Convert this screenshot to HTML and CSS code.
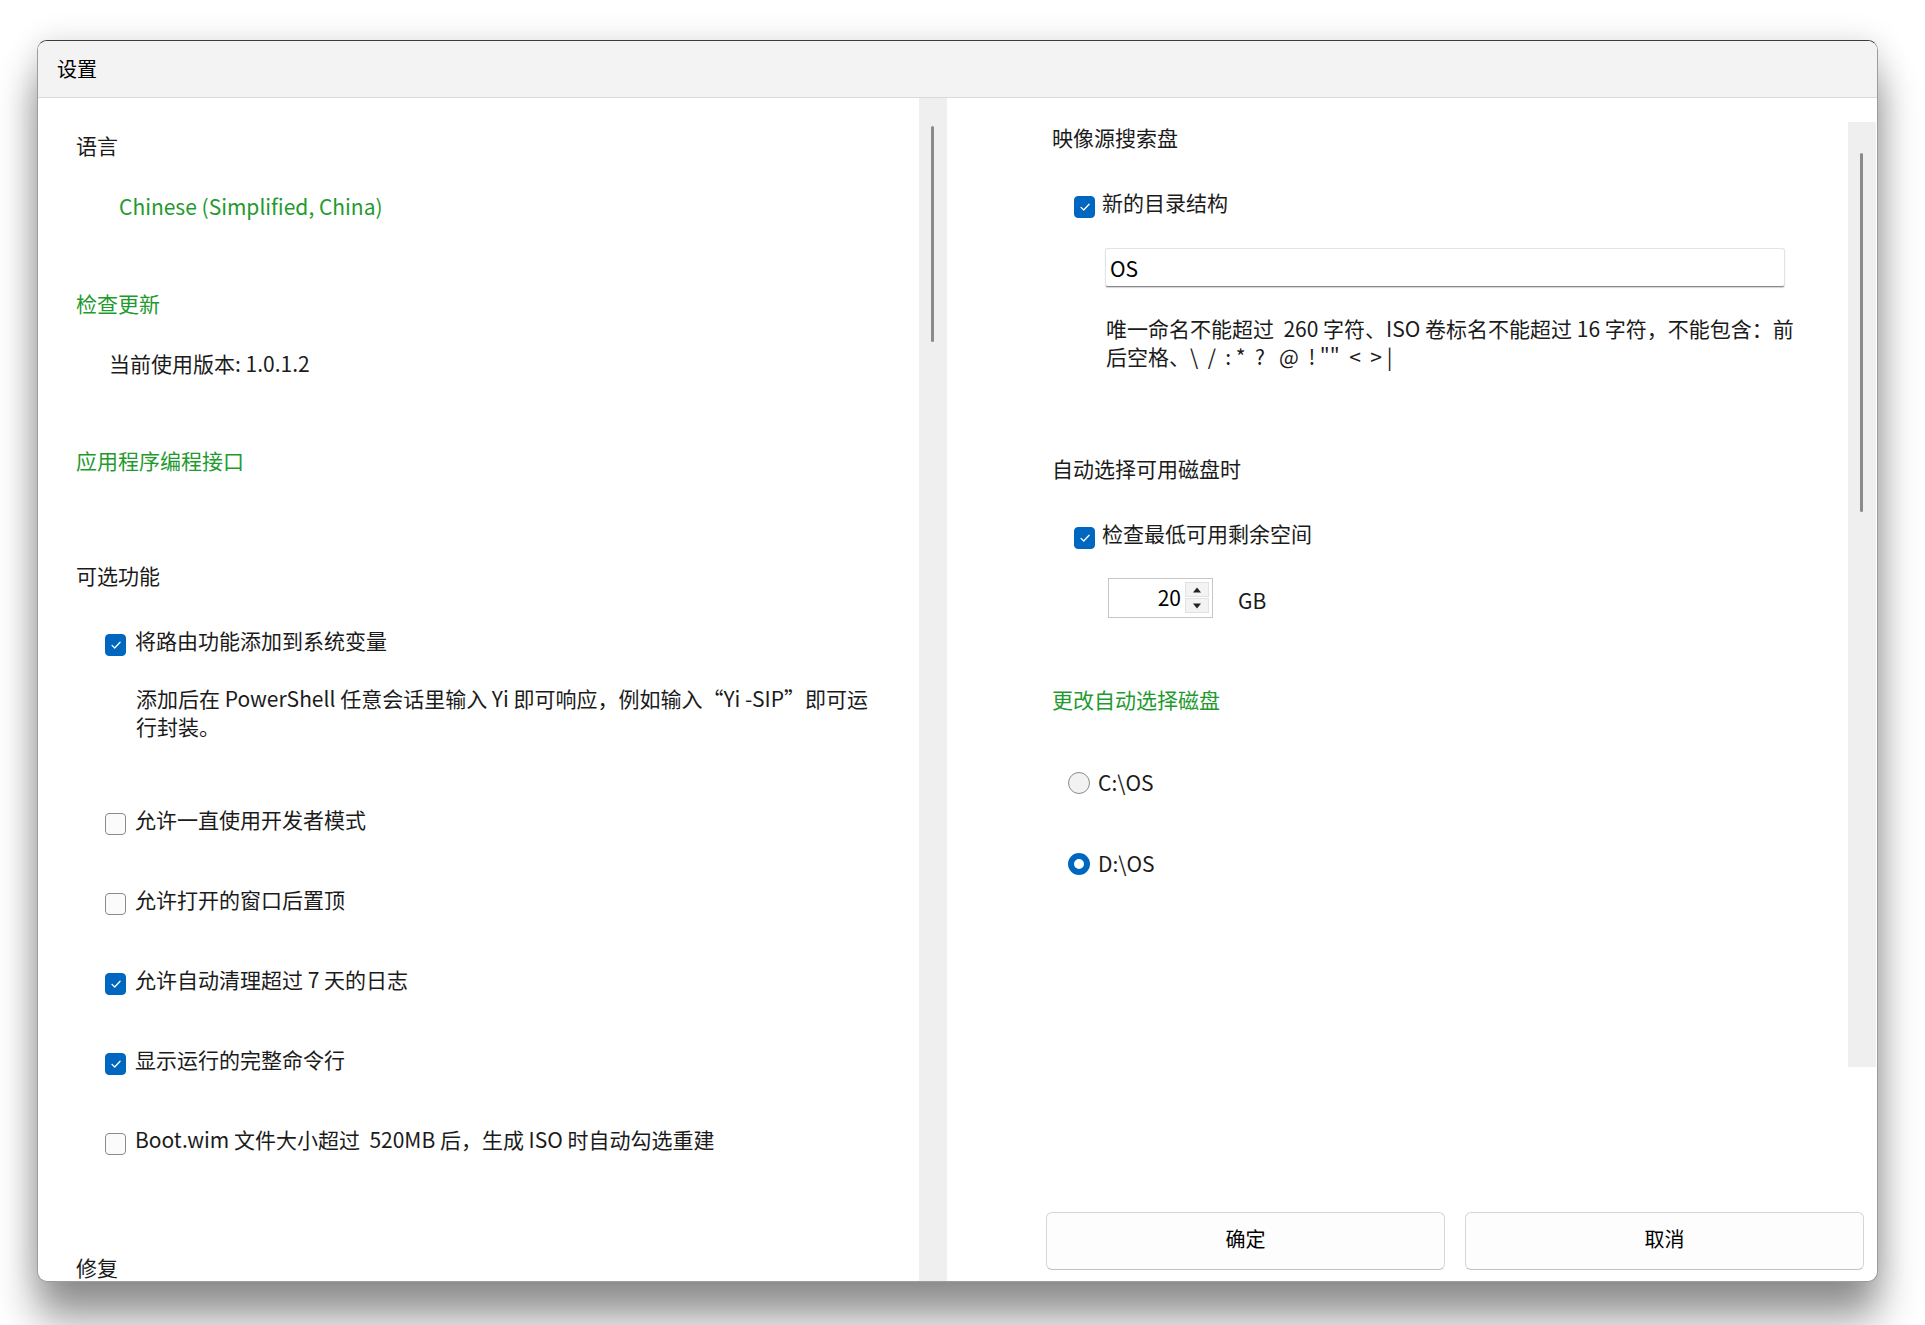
FILE: index.html
```html
<!DOCTYPE html>
<html lang="zh-CN">
<head>
<meta charset="utf-8">
<title>设置</title>
<link rel="stylesheet" href="styles.css">
</head>
<body>
<div class="window">
  <div class="titlebar">设置</div>
  <div class="main">
    <div class="left">
      <div class="left-content">
        <div class="heading">语言</div>
        <div class="lang">Chinese (Simplified, China)</div>
        <div class="link link-update">检查更新</div>
        <div class="version">当前使用版本: 1.0.1.2</div>
        <div class="link link-api">应用程序编程接口</div>
        <div class="heading heading-opt">可选功能</div>
        <div class="options">
          <div class="opt-group">
            <label class="check"><span class="box checked"><svg viewBox="0 0 12 12"><path d="M2.6 6.3l2.3 2.3 4.6-5"/></svg></span>将路由功能添加到系统变量</label>
            <p class="desc">添加后在 PowerShell 任意会话里输入 Yi 即可响应，例如输入“Yi -SIP”即可运行封装。</p>
          </div>
          <label class="check"><span class="box"></span>允许一直使用开发者模式</label>
          <label class="check"><span class="box"></span>允许打开的窗口后置顶</label>
          <label class="check"><span class="box checked"><svg viewBox="0 0 12 12"><path d="M2.6 6.3l2.3 2.3 4.6-5"/></svg></span>允许自动清理超过 7 天的日志</label>
          <label class="check"><span class="box checked"><svg viewBox="0 0 12 12"><path d="M2.6 6.3l2.3 2.3 4.6-5"/></svg></span>显示运行的完整命令行</label>
          <label class="check"><span class="box"></span>Boot.wim 文件大小超过&nbsp; 520MB 后，生成 ISO 时自动勾选重建</label>
        </div>
        <div class="heading heading-repair">修复</div>
      </div>
      <div class="vscroll left-scroll"><div class="thumb"></div></div>
    </div>
    <div class="right">
      <div class="right-top">
        <div class="right-content">
          <div class="heading">映像源搜索盘</div>
          <label class="check check-r1"><span class="box checked"><svg viewBox="0 0 12 12"><path d="M2.6 6.3l2.3 2.3 4.6-5"/></svg></span>新的目录结构</label>
          <div class="textbox">OS</div>
          <p class="help">唯一命名不能超过&nbsp; 260 字符、ISO 卷标名不能超过 16 字符，不能包含：前后空格、\&nbsp; / &nbsp;: * &nbsp;? &nbsp;&nbsp;@ &nbsp;! "" &nbsp;&lt; &nbsp;&gt; |</p>
          <div class="heading heading-auto">自动选择可用磁盘时</div>
          <label class="check check-r2"><span class="box checked"><svg viewBox="0 0 12 12"><path d="M2.6 6.3l2.3 2.3 4.6-5"/></svg></span>检查最低可用剩余空间</label>
          <div class="spin-row">
            <div class="spin">
              <span class="spin-val">20</span>
              <span class="spin-btns">
                <span class="spin-btn"><svg viewBox="0 0 10 6"><path d="M1 5.5L5 0.5 9 5.5z"/></svg></span>
                <span class="spin-btn"><svg viewBox="0 0 10 6"><path d="M1 0.5L5 5.5 9 0.5z"/></svg></span>
              </span>
            </div>
            <span class="unit">GB</span>
          </div>
          <div class="link link-change">更改自动选择磁盘</div>
          <label class="radio radio-c"><span class="dot"></span>C:\OS</label>
          <label class="radio radio-d"><span class="dot on"></span>D:\OS</label>
        </div>
        <div class="vscroll right-scroll"><div class="thumb"></div></div>
      </div>
      <div class="footer">
        <button class="btn">确定</button>
        <button class="btn">取消</button>
      </div>
    </div>
  </div>
</div>
</body>
</html>
```
FILE: styles.css
```css
html, body {
  margin: 0;
  padding: 0;
  background: #ffffff;
  width: 1925px;
  height: 1325px;
  overflow: hidden;
  font-family: "Noto Sans CJK SC", "Noto Sans", sans-serif;
  color: #1b1b1b;
}

.window {
  margin: 40px 0 0 37px;
  width: 1841px;
  height: 1242px;
  box-sizing: border-box;
  border: 1px solid #9c9c9c;
  border-top-color: #3a3a3a;
  border-radius: 10px;
  overflow: hidden;
  background: #ffffff;
  display: flex;
  flex-direction: column;
  box-shadow: 0 36px 40px rgba(0, 0, 0, 0.42), 0 0 30px rgba(0, 0, 0, 0.13);
}

.titlebar {
  height: 57px;
  flex: none;
  box-sizing: border-box;
  background: #f3f3f3;
  border-bottom: 1px solid #dadada;
  display: flex;
  align-items: center;
  padding-left: 19px;
  font-size: 20px;
  color: #000;
  padding-bottom: 2px;
}

.main {
  flex: 1;
  display: flex;
  min-height: 0;
}

.left {
  width: 909px;
  flex: none;
  display: flex;
}

.left-content {
  flex: 1;
  padding: 33px 0 0 38px;
  font-size: 21px;
  line-height: 28px;
}

.vscroll {
  width: 28px;
  flex: none;
  background: #efefef;
  position: relative;
}

.vscroll .thumb {
  position: absolute;
  left: 12px;
  width: 3px;
  border-radius: 2px;
  background: #8a8a8a;
}

.left-scroll .thumb {
  top: 28px;
  height: 216px;
}

.heading {
  color: #1b1b1b;
}

.link {
  color: #1f9a2f;
}

.lang {
  margin-top: 33px;
  margin-left: 43px;
  color: #1f9a2f;
}

.link-update {
  margin-top: 69px;
}

.version {
  margin-top: 32px;
  margin-left: 33px;
}

.link-api {
  margin-top: 69px;
}

.heading-opt {
  margin-top: 87px;
}

.options {
  margin-top: 37px;
  margin-left: 29px;
  display: flex;
  flex-direction: column;
  gap: 52px;
}

.opt-group {
  display: flex;
  flex-direction: column;
  margin-bottom: 13px;
}

.check, .radio {
  display: flex;
  align-items: center;
  height: 28px;
  white-space: nowrap;
}

.box {
  width: 21px;
  height: 22px;
  box-sizing: border-box;
  border: 1px solid #8b8b8b;
  border-radius: 4px;
  background: #fbfbfb;
  margin-right: 9px;
  flex: none;
  display: flex;
  align-items: center;
  justify-content: center;
  position: relative;
  top: 5px;
}

.box.checked {
  background: #0067c0;
  border-color: #0067c0;
}

.box svg {
  width: 14px;
  height: 14px;
  fill: none;
  stroke: #ffffff;
  stroke-width: 1.1;
  stroke-linecap: round;
  stroke-linejoin: round;
}

.desc {
  margin: 30px 0 0 31px;
  width: 742px;
  color: #1b1b1b;
}

.heading-repair {
  margin-top: 100px;
}

.right {
  flex: 1;
  display: flex;
  flex-direction: column;
}

.right-top {
  display: flex;
  height: 969px;
  flex: none;
}

.right-content {
  flex: 1;
  padding: 25px 0 0 105px;
  font-size: 21px;
  line-height: 28px;
}

.right-scroll {
  margin-top: 24px;
  margin-right: 1px;
}

.right-scroll .thumb {
  top: 31px;
  height: 359px;
}

.check-r1 {
  margin-top: 37px;
  margin-left: 22px;
}

.check-r1 .box, .check-r2 .box {
  margin-right: 7px;
}

.textbox {
  margin-top: 32px;
  margin-left: 53px;
  width: 680px;
  height: 39px;
  box-sizing: border-box;
  border: 1px solid #e3e3e3;
  border-bottom: 1px solid #8a8a8a;
  box-shadow: 0 1px 1px rgba(0, 0, 0, 0.18);
  border-radius: 3px;
  padding: 0 4px;
  display: flex;
  align-items: center;
  color: #000;
}

.help {
  margin: 27px 0 0 54px;
  width: 700px;
}

.heading-auto {
  margin-top: 84px;
}

.check-r2 {
  margin-top: 37px;
  margin-left: 22px;
}

.spin-row {
  margin-top: 31px;
  margin-left: 56px;
  display: flex;
  align-items: center;
}

.spin {
  width: 105px;
  height: 40px;
  box-sizing: border-box;
  border: 1px solid #c6c6c6;
  display: flex;
  align-items: center;
  justify-content: flex-end;
  padding-right: 3px;
  background: #fff;
}

.spin-val {
  margin-right: 4px;
  color: #000;
  position: relative;
  top: -1px;
}

.spin-btns {
  display: flex;
  flex-direction: column;
  gap: 1px;
  height: 32px;
}

.spin-btn {
  width: 24px;
  height: 15px;
  background: #f3f3f3;
  border: 1px solid #e2e2e2;
  box-sizing: border-box;
  display: flex;
  align-items: center;
  justify-content: center;
}

.spin-btn svg {
  width: 10px;
  height: 6px;
  fill: #222;
}

.unit {
  margin-left: 25px;
  color: #1b1b1b;
  position: relative;
  top: 2px;
}

.link-change {
  margin-top: 67px;
}

.radio {
  margin-left: 16px;
}

.radio-c {
  margin-top: 55px;
}

.radio-d {
  margin-top: 53px;
}

.dot {
  width: 22px;
  height: 22px;
  box-sizing: border-box;
  border-radius: 50%;
  border: 1px solid #8b8b8b;
  background: #f2f2f2;
  margin-right: 8px;
  flex: none;
  position: relative;
  top: 1px;
}

.dot.on {
  border: 6px solid #0067c0;
  background: #ffffff;
}

.footer {
  flex: 1;
  display: flex;
  align-items: flex-end;
  gap: 20px;
  padding: 0 13px 11px 99px;
}

.btn {
  flex: 1;
  height: 58px;
  font-family: "Noto Sans CJK SC", sans-serif;
  font-size: 20px;
  color: #000;
  background: #fdfdfd;
  border: 1px solid #d6d6d6;
  border-bottom-color: #c2c2c2;
  border-radius: 6px;
  padding: 0 0 5px 0;
}
```
